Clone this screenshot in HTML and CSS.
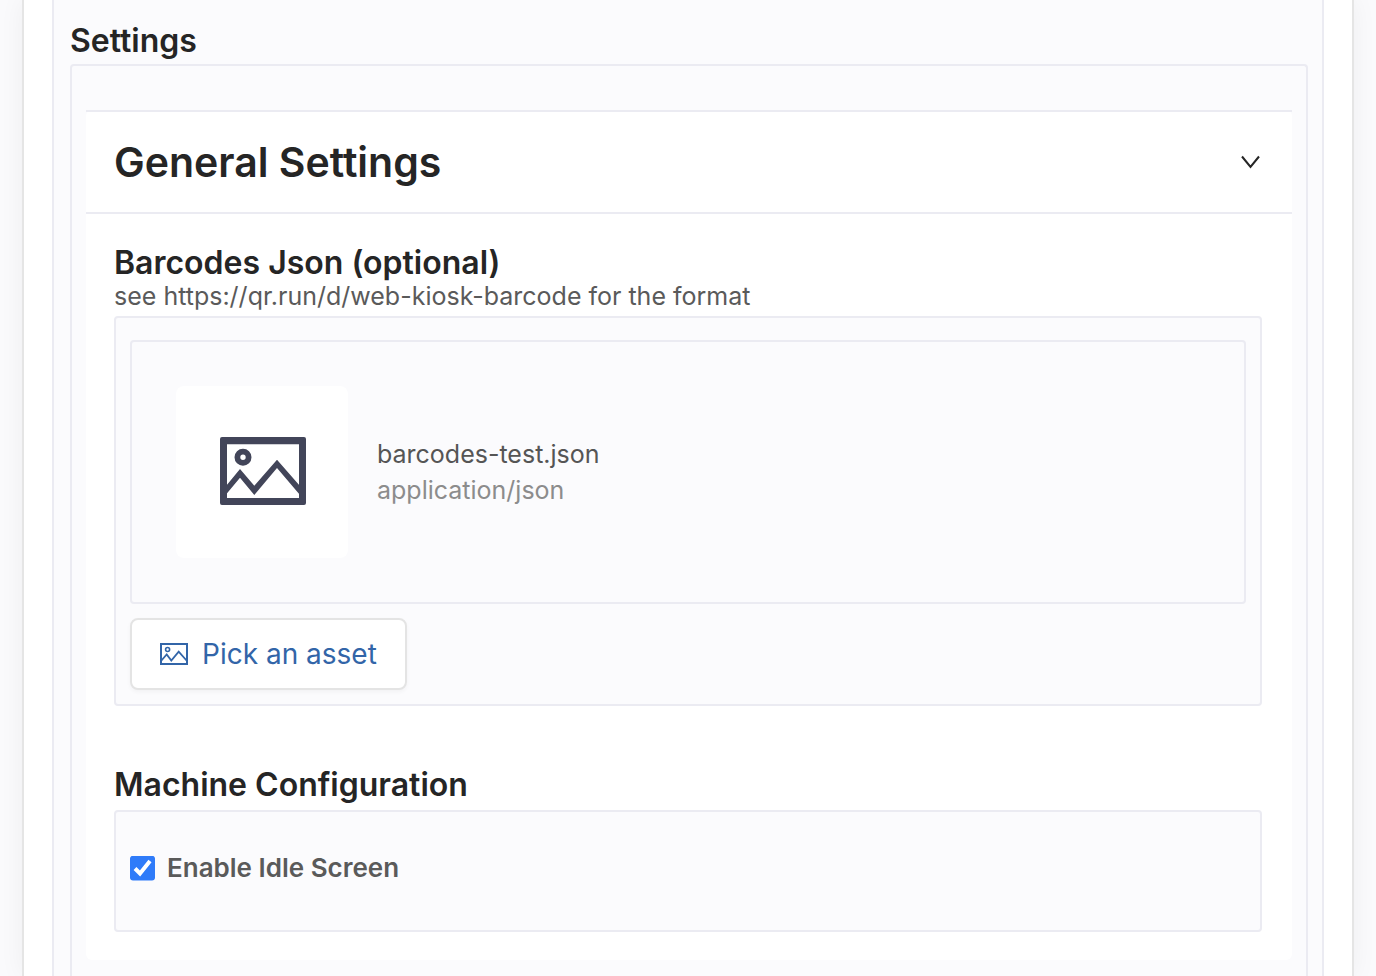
FILE: index.html
```html
<!DOCTYPE html>
<html lang="en">
<head>
<meta charset="utf-8">
<title>Settings</title>
<link rel="stylesheet" href="styles.css">
</head>
<body>
<main class="page">
  <section class="section">
    <h2 class="title">Settings</h2>
    <div class="group">
      <div class="panel">
        <header class="panel-header">
          <h1 class="panel-title">General Settings</h1>
          <button class="toggle" type="button" aria-label="Collapse General Settings" aria-expanded="true">
            <svg width="20" height="16" viewBox="0 0 20 16" fill="none" stroke="currentColor" stroke-width="2"><path d="M2 2.500L10.500 13L19 2.500"/></svg>
          </button>
        </header>
        <div class="panel-body">
          <section class="field">
            <h2 class="title">Barcodes Json (optional)</h2>
            <p class="hint">see https://qr.run/d/web-kiosk-barcode for the format</p>
            <div class="box asset-box">
              <div class="asset">
                <div class="thumb">
                  <svg width="88" height="70" viewBox="-2 0 88 70" fill="currentColor">
                    <path fill-rule="evenodd" d="M2 0H84Q86 0 86 2V66Q86 68 84 68H2Q0 68 0 66V2Q0 0 2 0ZM7 7.300V61H79V7.300Z"/>
                    <path d="M6 49L20 32L34.300 48.700L57 22.700L80 49V58L57 31L34.300 58L20 40.700L6 57.500Z"/>
                    <circle cx="23" cy="20.300" r="5.600" fill="none" stroke="currentColor" stroke-width="5.800"/>
                  </svg>
                </div>
                <div class="asset-info">
                  <span class="asset-name">barcodes-test.json</span>
                  <span class="asset-type">application/json</span>
                </div>
              </div>
              <button class="pick" type="button">
                <svg width="28" height="22" viewBox="0 0 28 22" fill="none" stroke="currentColor">
                  <rect x="1" y="1" width="26" height="20" stroke-width="2"/>
                  <path stroke-width="1.800" d="M1 18L6.700 11.500L11.300 17.500L18.700 8.700L27 18"/>
                  <circle cx="7.600" cy="6.500" r="2" stroke-width="1.600"/>
                </svg>
                <span>Pick an asset</span>
              </button>
            </div>
          </section>
          <section class="field">
            <h2 class="title">Machine Configuration</h2>
            <div class="box option-box">
              <input class="check" type="checkbox" id="idle" checked>
              <label class="check-label" for="idle">Enable Idle Screen</label>
            </div>
          </section>
        </div>
      </div>
    </div>
  </section>
</main>
</body>
</html>
```
FILE: styles.css
```css
* { box-sizing: border-box; }

body {
  margin: 0;
  background: #fafafc;
  color: #252525;
  font-family: Inter, "Liberation Sans", sans-serif;
}

h1, h2, p { margin: 0; }

.page {
  min-height: 100vh;
  margin: 0 22px;
  padding: 0 28px;
  display: flex;
  background: #fff;
  border: solid #e5e5e5;
  border-width: 0 2px;
  box-shadow: 0 0 24px rgba(0, 0, 0, 0.05);
}

.section {
  flex: 1;
  display: flex;
  flex-direction: column;
  padding: 20px 14px 0 16px;
  background: #fbfbfd;
  border: solid #ebebf2;
  border-width: 0 2px;
}

.title {
  font-size: 32px;
  line-height: 42px;
  font-weight: 600;
}

.group {
  flex: 1;
  margin-top: 2px;
  padding: 44px 14px 14px;
  border: 2px solid #ebebf2;
  border-bottom: 0;
  border-radius: 4px 4px 0 0;
}

.panel {
  background: #fff;
  border-radius: 6px;
}

.panel-header {
  display: flex;
  justify-content: space-between;
  align-items: center;
  height: 104px;
  padding: 0 30px 0 28px;
  border: solid #ebebf2;
  border-width: 2px 0;
}

.panel-title {
  font-size: 41px;
  line-height: 52px;
  font-weight: 600;
}

.toggle {
  display: flex;
  padding: 2px;
  border: 0;
  background: none;
  color: #252525;
}

.panel-body {
  display: flex;
  flex-direction: column;
  gap: 58px;
  padding: 28px 30px 28px 28px;
}

.hint {
  margin-bottom: 4px;
  font-size: 25px;
  line-height: 24px;
  color: #5a5a5a;
}

.box {
  margin-top: 4px;
  background: #fbfbfd;
  border: 2px solid #ebebf2;
  border-radius: 4px;
}

.asset-box { padding: 22px 14px 14px; }

.hint + .box { margin-top: 8px; }

.asset {
  display: flex;
  align-items: center;
  gap: 29px;
  padding: 44px;
  border: 2px solid #ebebf2;
  border-radius: 4px;
}

.thumb {
  display: flex;
  align-items: center;
  justify-content: center;
  width: 172px;
  height: 172px;
  background: #fff;
  border-radius: 8px;
  color: #424559;
}

.asset-info {
  display: flex;
  flex-direction: column;
  font-size: 25px;
  line-height: 36px;
}

.asset-name { color: #555; }
.asset-type { color: #8c8c8c; }

.pick {
  display: flex;
  align-items: center;
  gap: 14px;
  height: 72px;
  margin-top: 14px;
  padding: 0 28px;
  background: #fff;
  border: 2px solid #e4e4e4;
  border-radius: 8px;
  box-shadow: 0 2px 4px rgba(0, 0, 0, 0.04);
  color: #3265a8;
  font: 400 28px/36px Inter, "Liberation Sans", sans-serif;
}

.option-box {
  display: flex;
  align-items: center;
  gap: 12px;
  padding: 36px 14px 42px;
}

.check {
  width: 25px;
  height: 25px;
  margin: 0;
  accent-color: #2f7bf9;
  clip-path: inset(0 round 3px);
}

.check-label {
  font-size: 26px;
  line-height: 40px;
  font-weight: 600;
  color: #5a5a5a;
}
```
